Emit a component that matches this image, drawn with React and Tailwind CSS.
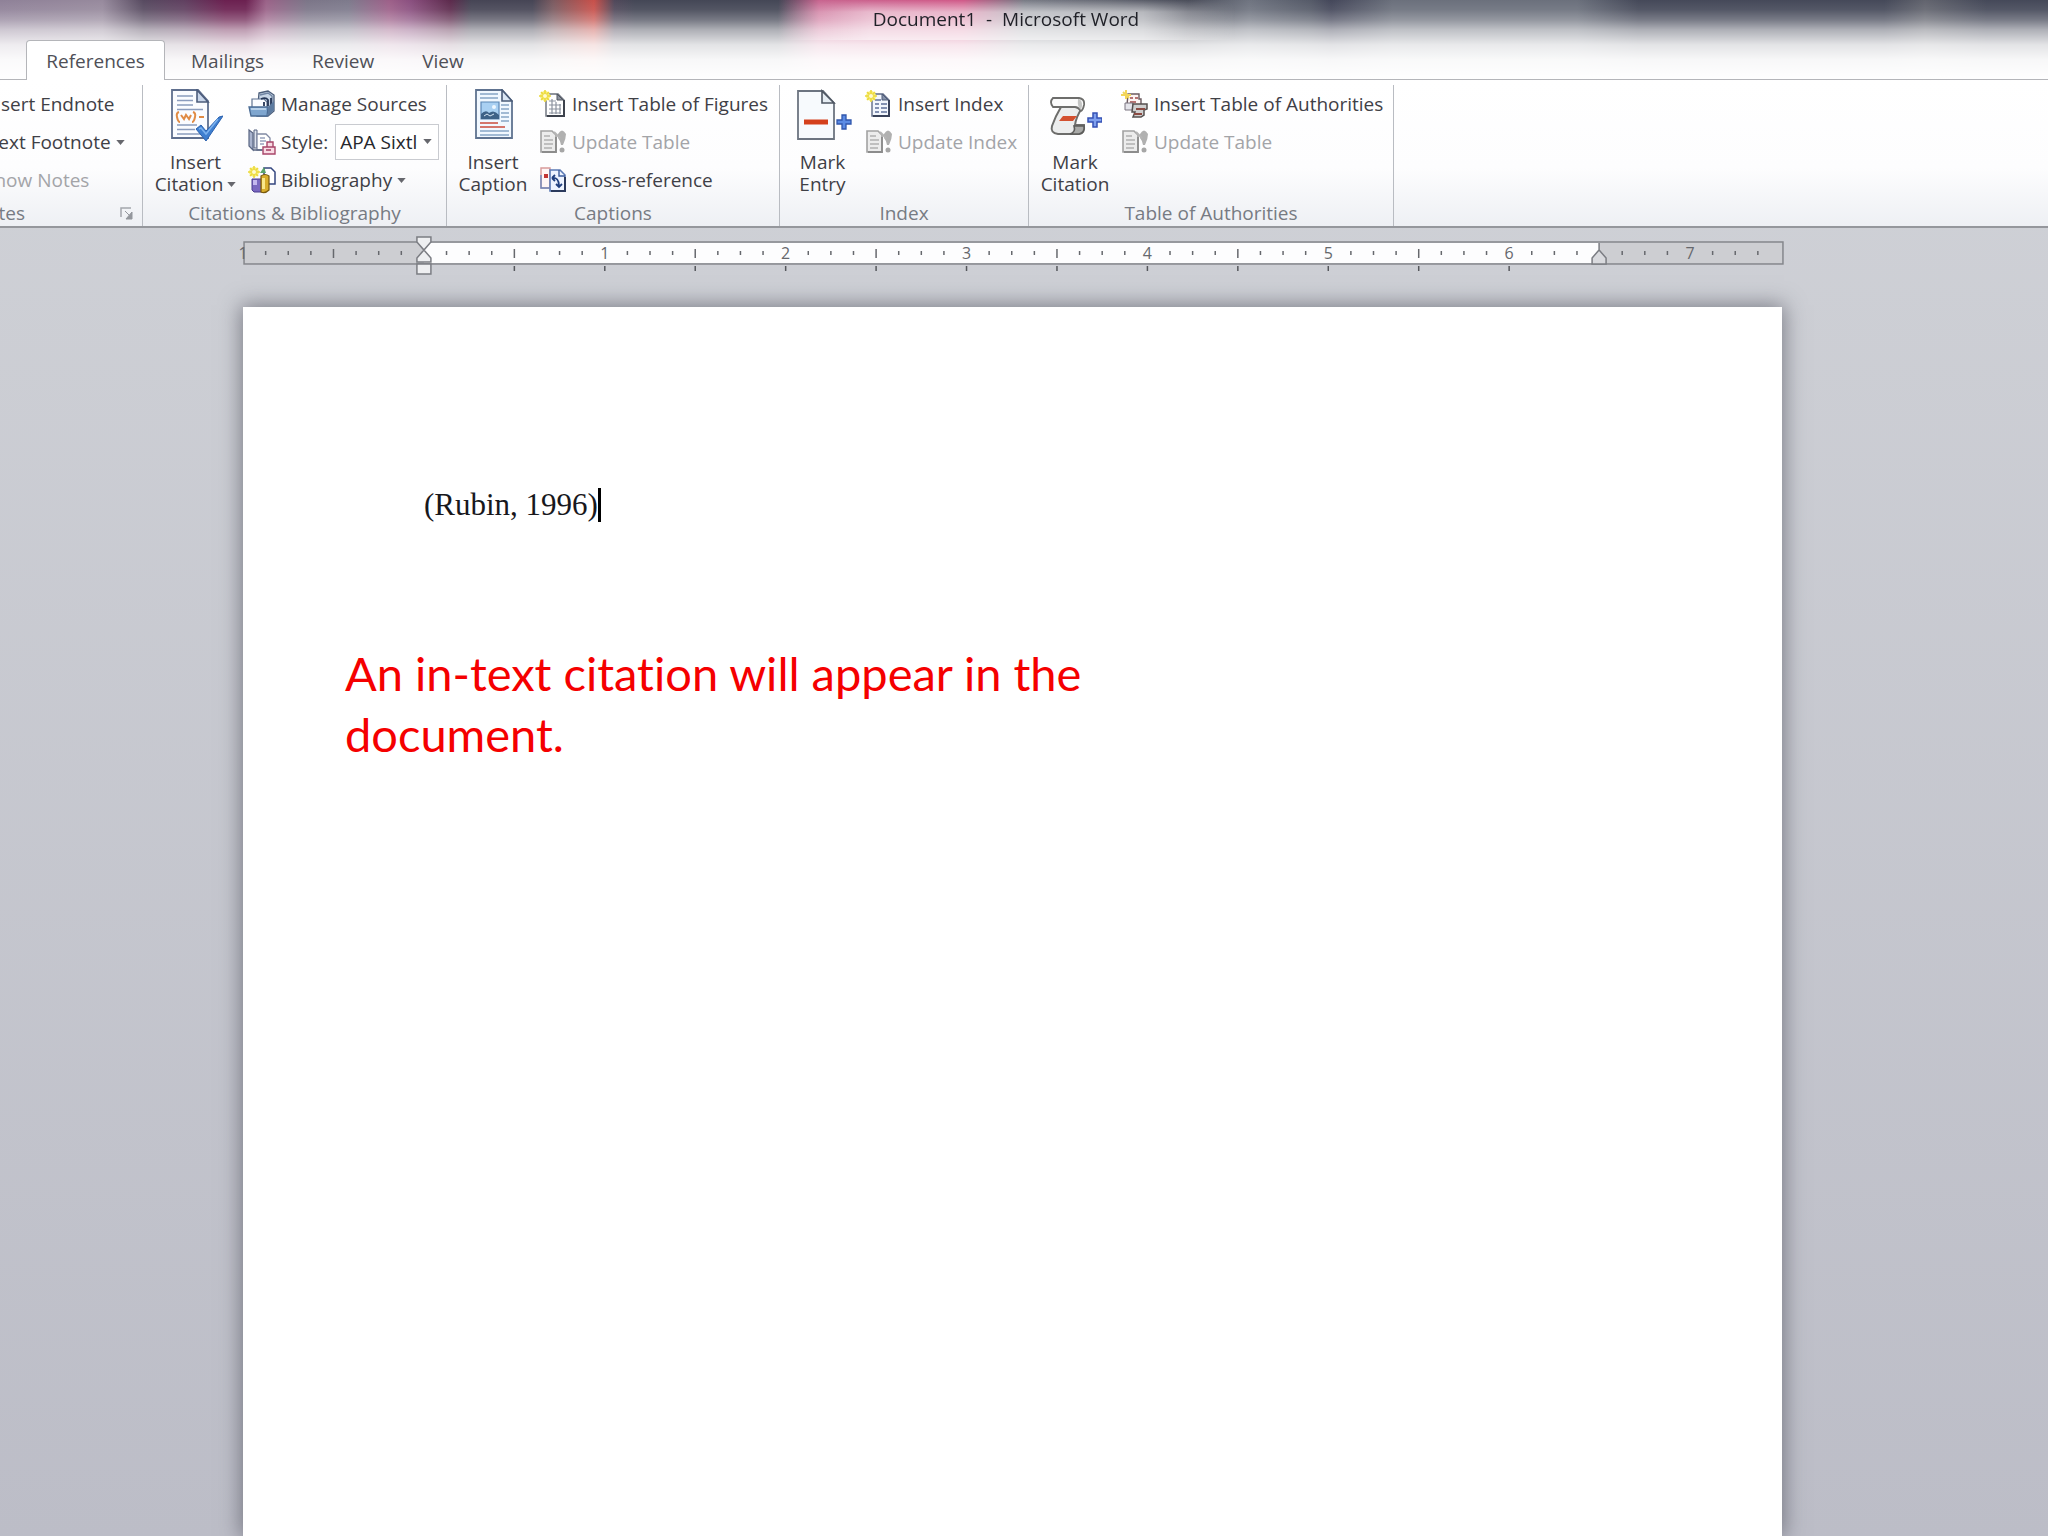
import React from 'react';

const tabs = ['Mailings', 'Review', 'View'];

function Arrow({ className = '' }) {
    return (
        <svg className={`shrink-0 ${className}`} width="9" height="5" viewBox="0 0 10 6" aria-hidden="true">
            <path d="M0 0h10L5 6z" fill="#66676d" />
        </svg>
    );
}

function Spark() {
    return (
        <g>
            <circle cx="6" cy="6" r="5" fill="#f7ef7a" />
            <path d="M6 0v12M0 6h12M2 2l8 8M10 2l-8 8" stroke="#ecd93c" strokeWidth="1.6" />
            <circle cx="6" cy="6" r="2" fill="#fffbd0" />
        </g>
    );
}

function CitationIcon() {
    return (
        <svg width="54" height="54" viewBox="-2 0 54 54" aria-hidden="true">
            <path d="M1 1h26l10 11v37H1z" fill="#fbfcff" stroke="#5f6f8e" strokeWidth="1.8" />
            <path d="M26 1v12h11z" fill="#c9d6ea" stroke="#4d5d7c" strokeWidth="1.6" />
            <path d="M6 7h16M6 11.5h16M6 16h16M6 20.5h26M6 36h20M6 40.5h18M6 45h24" stroke="#8b9cbd" strokeWidth="1.7" />
            <path d="M8 23q-3 1-2 5 1 5 3 5M22 23q3 1 2 5-1 5-3 5M10 26l3 4 2-4 3 4 2-4M28 28h5" fill="none" stroke="#e08b45" strokeWidth="2" />
            <path d="M25 40l5-4 5 6L48 28l4-1-17 25z" fill="#3f7fd0" stroke="#2c62ae" strokeWidth="1" />
            <path d="M28 40l2-1 5 6 12-15" fill="none" stroke="#7db2ee" strokeWidth="1.5" />
        </svg>
    );
}

function CaptionIcon() {
    return (
        <svg width="39" height="54" viewBox="-1 0 39 54" aria-hidden="true">
            <path d="M1 1h26l10 11v37H1z" fill="#f1f8ff" stroke="#5f7390" strokeWidth="1.8" />
            <path d="M27 1v11h10z" fill="#dbe7f5" stroke="#4b5c78" strokeWidth="1.6" />
            <path d="M5 5h18M5 9h18M26 16h8M26 20h8M26 24h8M26 28h8M26 32h8M5 42h29M5 46h29" stroke="#86a5c6" strokeWidth="1.6" />
            <path d="M5 34h18M5 38h25" stroke="#d4766c" strokeWidth="1.8" />
            <path d="M6 13h18v17H6z" fill="#a9d0f2" stroke="#5d88b6" strokeWidth="1.2" />
            <path d="M6 30v-5q5-5 8-1 5-4 10 2v4z" fill="#3e6288" />
            <path d="M9 27l3-2 3 2 4-2" stroke="#d6e6f4" fill="none" />
            <circle cx="19" cy="18" r="2" fill="#eef7ff" />
        </svg>
    );
}

function MarkEntryIcon() {
    return (
        <svg width="58" height="54" viewBox="-3 0 58 54" aria-hidden="true">
            <path d="M1 2h25l11 12v36H1z" fill="#f7fafd" stroke="#6c7480" strokeWidth="1.8" />
            <path d="M25 2v12h12z" fill="#e6edf3" stroke="#4f5763" strokeWidth="1.6" />
            <path d="M7 33h24" stroke="#d4401c" strokeWidth="5" />
            <path d="M45 26h4v5h5v4h-5v5h-4v-5h-5v-4h5z" fill="#5b8be4" stroke="#2f56ac" strokeWidth="1.3" />
        </svg>
    );
}

function MarkCitationIcon() {
    return (
        <svg width="54" height="54" viewBox="-1 0 54 54" aria-hidden="true">
            <path d="M4 18h24q4-1 5 1Q27 28 26 36h9q1 8-5 9H9q-8-1-6-8 3-9 9-19z" fill="#eceded" stroke="#6d6d6b" strokeWidth="2" />
            <path d="M4 9h26q6 1 5 7-1 5-3 6-3-4-6-4H4q-4-5 0-9z" fill="#fbfbfb" stroke="#6d6d6b" strokeWidth="1.8" />
            <path d="M30 10q5 3 2 11-4-3-3-11z" fill="#c4c5c4" />
            <path d="M25 37h10q1 7-5 8h-9q6-2 4-8z" fill="#a9aaa8" stroke="#5d5d5b" strokeWidth="1.6" />
            <path d="M14 27h14l-4 5H10z" fill="#d3502f" />
            <path d="M44 24h4v5h5v4h-5v5h-4v-5h-5v-4h5z" fill="#7fa0ee" stroke="#3550b4" strokeWidth="1.5" />
        </svg>
    );
}

function ManageSourcesIcon() {
    return (
        <svg width="28" height="28" viewBox="0 0 28 28" aria-hidden="true">
            <path d="M11 3l9-2 6 4v16l-6 5H9z" fill="#c8d6e6" stroke="#4c5e7a" strokeWidth="1.3" />
            <path d="M4 9h12l3 3v9H4z" fill="#fafcff" stroke="#5f7391" strokeWidth="1.2" />
            <path d="M12 5l8-2 4 3v10" fill="none" stroke="#6f84a2" strokeWidth="1.4" />
            <path d="M13 9q5-2 7 1v6M16 12v4M23 8v8" fill="none" stroke="#253656" strokeWidth="1.8" />
            <path d="M1 17h19l-1 9H3z" fill="#7fa6cf" stroke="#4b6c95" strokeWidth="1.3" />
            <path d="M3 19h15" stroke="#c8def2" strokeWidth="1.5" />
            <path d="M20 17l6-6v9l-6 6z" fill="#5d7ba0" />
        </svg>
    );
}

function StyleIcon() {
    return (
        <svg width="28" height="28" viewBox="0 0 28 28" aria-hidden="true">
            <path d="M1 2l4 3v17l-4-4z" fill="#a9b3cd" stroke="#596582" strokeWidth="1.2" />
            <path d="M6 2h3v18H6z" fill="#dfe4ee" stroke="#596582" />
            <path d="M9 6h9l4 4v12H9z" fill="#fff" stroke="#8089a3" strokeWidth="1.3" />
            <path d="M12 10h5M12 13h6M12 16h4" stroke="#98a3bd" strokeWidth="1.3" />
            <path d="M5 22h9" stroke="#596582" strokeWidth="1.5" />
            <path d="M19 14h6v5h-6zM15 19h12v7H15z" fill="#f9dbe4" stroke="#a8466a" strokeWidth="1.4" />
            <path d="M18 22h5" stroke="#a8466a" strokeWidth="1.6" />
        </svg>
    );
}

function BibliographyIcon() {
    return (
        <svg width="28" height="28" viewBox="0 0 28 28" aria-hidden="true">
            <path d="M16 2h7l4 4v12H16z" fill="#fff" stroke="#33467f" strokeWidth="1.5" />
            <path d="M16 1l-4 6h6z" fill="#5aa56b" />
            <path d="M4 13h10v13H6l-2-2z" fill="#7a68c0" stroke="#4b3c90" />
            <path d="M5 14h4v5H5z" fill="#c4b8ee" />
            <path d="M13 10q4-3 8 0v14q-4 4-8 2z" fill="#d9ae2c" stroke="#7a5b0e" strokeWidth="1.2" />
            <path d="M14 12h3v11h-3z" fill="#fae98a" />
            <Spark />
        </svg>
    );
}

function InsertTableIcon() {
    return (
        <svg width="28" height="28" viewBox="0 0 28 28" aria-hidden="true">
            <path d="M7 4h12l6 6v16H7z" fill="#fff" stroke="#6a707b" strokeWidth="1.4" />
            <path d="M18 4v6h6z" fill="#8d939e" stroke="#4f5560" />
            <path d="M10 11h7M10 15h12M10 19h12M10 23h12M13 9v15M17 12v12M21 14v10" stroke="#8c939f" strokeWidth="1.2" />
            <path d="M25 10v16H8" fill="none" stroke="#3d424c" strokeWidth="2" />
            <Spark />
        </svg>
    );
}

function InsertIndexIcon() {
    return (
        <svg width="28" height="28" viewBox="0 0 28 28" aria-hidden="true">
            <path d="M7 4h11l6 6v16H7z" fill="#f2f6fd" stroke="#5f6b86" strokeWidth="1.4" />
            <path d="M17 4v6h6z" fill="#8692aa" stroke="#4f5c78" />
            <path d="M10 10h6M10 14h4M16 14h6M10 18h4M16 18h6M10 22h4M16 22h6" stroke="#5f7099" strokeWidth="1.6" />
            <path d="M24 10v16H8" fill="none" stroke="#39425a" strokeWidth="2" />
            <Spark />
        </svg>
    );
}

function InsertAuthoritiesIcon() {
    return (
        <svg width="28" height="28" viewBox="0 0 28 28" aria-hidden="true">
            <path d="M7 4h11v5h2v6H6z" fill="#fdf4f3" stroke="#6b5b60" strokeWidth="1.4" />
            <path d="M9 8h3M14 8h3M9 12h6" stroke="#a04848" strokeWidth="1.6" />
            <path d="M4 13h8v7H4z" fill="#e4e4ea" stroke="#7a7480" />
            <path d="M12 14h14v5l-3 1v5l-3 2h-8l2-5h-3z" fill="#cfcfcf" stroke="#55504f" strokeWidth="1.5" />
            <path d="M15 19h9M13 24h8" stroke="#8b4a42" strokeWidth="1.8" />
            <path d="M5 0v9M0 5h10M2 2l6 6" stroke="#f3d65a" strokeWidth="2" />
        </svg>
    );
}

function UpdateIcon() {
    return (
        <svg width="28" height="28" viewBox="0 0 28 28" aria-hidden="true">
            <path d="M2 3h11l4 4v17H2z" fill="#ececec" stroke="#a2a2a2" strokeWidth="1.6" />
            <path d="M5 8h6M5 12h9M5 16h9M5 20h8" stroke="#b0b0b0" strokeWidth="1.5" />
            <path d="M3 24h14V9" fill="none" stroke="#8c8c8c" strokeWidth="1.8" />
            <path d="M19 6q4-7 8 0 0 5-3 11h-2q-1-5-3-7z" fill="#b0b0b0" />
            <path d="M15 4l6 6" stroke="#b5b5b5" strokeWidth="2" />
            <circle cx="23" cy="22" r="2.5" fill="#a6a6a6" />
        </svg>
    );
}

function CrossReferenceIcon() {
    return (
        <svg width="28" height="28" viewBox="0 0 28 28" aria-hidden="true">
            <path d="M2 2h9v20H2z" fill="#fff5f5" stroke="#d79a9a" strokeWidth="1.4" />
            <path d="M2 9v13h8" fill="none" stroke="#6f88bd" strokeWidth="1.4" />
            <path d="M5 8h4v4H5z" fill="#c23434" />
            <path d="M11 4h10l5 5v16H11z" fill="#eef4ff" stroke="#5b7ab5" strokeWidth="1.6" />
            <path d="M20 4v6h6" fill="none" stroke="#3d5c9c" strokeWidth="1.4" />
            <path d="M13 12q7-1 7 8M13 12l3-3M13 12l3 3M17 18l3 3 3-3" fill="none" stroke="#21407f" strokeWidth="1.8" />
            <path d="M26 11v14H12" fill="none" stroke="#2b3a5c" strokeWidth="2" />
        </svg>
    );
}

function Group({ label, className = '', children }) {
    return (
        <section className={`flex shrink-0 flex-col border-r border-[#b9bcc2] ${className}`} aria-label={label}>
            <div className="flex h-[115px]">{children}</div>
            <div className="flex h-[26px] items-center justify-center text-[19px] text-[#777b83]">{label}</div>
        </section>
    );
}

function BigButton({ icon, lines, arrow, className = '' }) {
    return (
        <button className={`flex shrink-0 flex-col items-center pt-1 text-[19px] leading-[22px] text-[#3f4046] ${className}`}>
            {icon}
            <span className="mt-2">{lines[0]}</span>
            <span className="flex items-center gap-1">
                {lines[1]}
                {arrow && <Arrow />}
            </span>
        </button>
    );
}

function SmallButton({ icon, children, arrow, disabled }) {
    return (
        <button
            disabled={disabled}
            className="flex h-[38px] items-center gap-[5px] whitespace-nowrap text-[19px] text-[#3f4046] disabled:text-[#a3a4a8]"
        >
            {icon}
            {children}
            {arrow && <Arrow />}
        </button>
    );
}

const INCH = 181;

function Ruler() {
    const eighths = Array.from({ length: 67 }, (_, i) => i - 7).filter((n) => n !== 0 && n !== 52);
    return (
        <svg className="block w-full overflow-visible" viewBox="0 0 1542 44" aria-label="Ruler">
            <rect x="1" y="9" width="1540" height="22" fill="#cdced2" stroke="#85878c" strokeWidth="1.5" />
            <rect x="181" y="10" width="1176" height="20" fill="#fdfdfe" />
            {eighths.map((n) => {
                const x = 181 + (n * INCH) / 8;
                if (n % 8 === 0) {
                    return (
                        <text key={n} x={x} y="26" textAnchor="middle" fontSize="16" fill="#66686d">
                            {n / 8}
                        </text>
                    );
                }
                const half = n % 4 === 0;
                return <path key={n} d={half ? `M${x} 16v9` : `M${x} 18v4`} stroke="#66686d" strokeWidth="1.5" />;
            })}
            <text x="0" y="26" textAnchor="middle" fontSize="16" fill="#66686d">1</text>
            {Array.from({ length: 12 }, (_, i) => (
                <path key={i} d={`M${181 + ((i + 1) * INCH) / 2} 33v5`} stroke="#55575c" strokeWidth="1.5" />
            ))}
            <path d="M174 4h14v5l-7 8-7-8zM181 17l7 8v4h-14v-4zM174 31h14v10h-14z" fill="#eeeff1" stroke="#7b7d83" strokeWidth="1.5" />
            <path d="M1357 17l7 8v6h-14v-6zM1357 10v7" fill="#d9dade" stroke="#7b7d83" strokeWidth="1.5" />
        </svg>
    );
}

export default function App() {
    return (
        <div className="flex min-h-screen flex-col overflow-hidden bg-[linear-gradient(to_bottom,#d1d3d8,#bcbdc7)] font-['Open_Sans','Noto_Sans',sans-serif]">
            <header className="bg-[linear-gradient(to_bottom,rgba(255,255,255,0)_0%,rgba(255,255,255,0.08)_12%,rgba(255,255,255,0.28)_25%,rgba(255,255,255,0.56)_37%,rgba(255,255,255,0.85)_56%,rgba(255,255,255,0.96)_75%,#fff_100%),linear-gradient(to_right,#8f8198_0%,#978a9d_5%,#574a60_7%,#604060_9%,#6b2050_11%,#6b2050_12%,#9a6288_13%,#7b7588_15%,#7d7a8c_17%,#9d6089_19%,#8b5080_20%,#5c2a4c_22%,#464555_23%,#464555_26%,#7a5a60_27%,#c8504a_29%,#50485a_30%,#444756_31%,#444756_38%,#c8648f_40%,#d05888_47%,#777a85_50%,#666974_54%,#4a4d5a_58%,#6f7480_61%,#555a68_64%,#44475a_65%,#6b707c_68%,#6b707c_77%,#454959_80%,#454959_92%,#62646e_94%,#454959_97%,#454959_100%)]">
                <div className="flex h-10 justify-center">
                    <h1 className="mr-[36px] h-10 bg-[linear-gradient(to_right,transparent,rgba(255,255,255,0.5)_20%,rgba(255,255,255,0.5)_80%,transparent)] mask-[linear-gradient(to_bottom,transparent,#000_30%)] px-24 text-[19px] leading-[38px] whitespace-pre text-[#1f2027]">Document1  -  Microsoft Word</h1>
                </div>
                <nav className="flex h-10 items-end text-[19px] text-[#4f5057]">
                    <span className="h-px w-[26px] bg-[#b4b5b9]" />
                    <button className="h-10 w-[139px] rounded-t border border-b-0 border-[#b4b5b9] bg-white pt-0.5">References</button>
                    <div className="flex h-10 flex-1 gap-12 border-b border-[#b4b5b9] pt-1 pl-[26px]">
                        {tabs.map((tab) => (
                            <button key={tab}>{tab}</button>
                        ))}
                    </div>
                </nav>
            </header>

            <div className="flex h-[148px] overflow-hidden border-b-2 border-[#95979c] bg-[linear-gradient(to_bottom,#fff_0%,#fdfdfe_60%,#eef0f4_100%)] pt-[5px]">
                <section className="w-[143px] shrink-0 overflow-hidden border-r border-[#b9bcc2]" aria-label="Footnotes">
                    <div className="-ml-4 flex h-[115px] flex-col">
                        <SmallButton>Insert Endnote</SmallButton>
                        <SmallButton arrow>Next Footnote</SmallButton>
                        <SmallButton disabled>Show Notes</SmallButton>
                    </div>
                    <div className="-ml-16 flex h-[26px] items-center justify-between pr-2 text-[19px] text-[#777b83]">
                        Footnotes
                        <button aria-label="Footnote options">
                            <svg width="14" height="14" viewBox="0 0 14 14">
                                <path d="M1 11V2h10" fill="none" stroke="#a4a7ad" strokeWidth="1.5" />
                                <path d="M5 5l6 6M12 6v7H6z" fill="#94979d" stroke="#94979d" />
                            </svg>
                        </button>
                    </div>
                </section>

                <Group label="Citations & Bibliography" className="w-[304px]">
                    <BigButton icon={<CitationIcon />} lines={['Insert', 'Citation']} arrow className="w-[105px]" />
                    <div>
                        <SmallButton icon={<ManageSourcesIcon />}>Manage Sources</SmallButton>
                        <div className="flex h-[38px] items-center gap-[5px] text-[19px] text-[#3f4046]">
                            <StyleIcon />
                            <label htmlFor="style">Style:</label>
                            <span className="relative ml-[2px]">
                                <select id="style" className="h-9 w-[104px] appearance-none border border-[#c9cbd0] bg-white pl-1 text-[#26272c]">
                                    <option>APA Sixtl</option>
                                </select>
                                <Arrow className="pointer-events-none absolute top-[15px] right-[7px]" />
                            </span>
                        </div>
                        <SmallButton icon={<BibliographyIcon />} arrow>Bibliography</SmallButton>
                    </div>
                </Group>

                <Group label="Captions" className="w-[333px]">
                    <BigButton icon={<CaptionIcon />} lines={['Insert', 'Caption']} className="w-[92px]" />
                    <div>
                        <SmallButton icon={<InsertTableIcon />}>Insert Table of Figures</SmallButton>
                        <SmallButton icon={<UpdateIcon />} disabled>Update Table</SmallButton>
                        <SmallButton icon={<CrossReferenceIcon />}>Cross-reference</SmallButton>
                    </div>
                </Group>

                <Group label="Index" className="w-[249px]">
                    <BigButton icon={<MarkEntryIcon />} lines={['Mark', 'Entry']} className="w-[85px]" />
                    <div>
                        <SmallButton icon={<InsertIndexIcon />}>Insert Index</SmallButton>
                        <SmallButton icon={<UpdateIcon />} disabled>Update Index</SmallButton>
                    </div>
                </Group>

                <Group label="Table of Authorities" className="w-[365px]">
                    <BigButton icon={<MarkCitationIcon />} lines={['Mark', 'Citation']} className="w-[92px]" />
                    <div>
                        <SmallButton icon={<InsertAuthoritiesIcon />}>Insert Table of Authorities</SmallButton>
                        <SmallButton icon={<UpdateIcon />} disabled>Update Table</SmallButton>
                    </div>
                </Group>
            </div>

            <main className="flex flex-1 flex-col pt-[5px] pr-[264px] pl-[243px]">
                <Ruler />
                <article className="mt-[30px] mr-[2px] flex-1 bg-white pt-[180px] pr-24 pl-[102px] shadow-[0_0_20px_2px_rgba(70,72,84,0.6)]">
                    <p className="flex items-center pl-[79px] font-['Liberation_Serif',serif] text-[31px] leading-9 text-[#18181c]">
                        (Rubin, 1996)
                        <span className="h-[34px] w-[3px] bg-black" />
                    </p>
                    <p className="mt-[120px] max-w-[800px] font-['Lato',sans-serif] text-[47px] leading-[61px] text-[#f50000] [font-variant-ligatures:none]">
                        An in-text citation will appear in the document.
                    </p>
                </article>
            </main>
        </div>
    );
}
